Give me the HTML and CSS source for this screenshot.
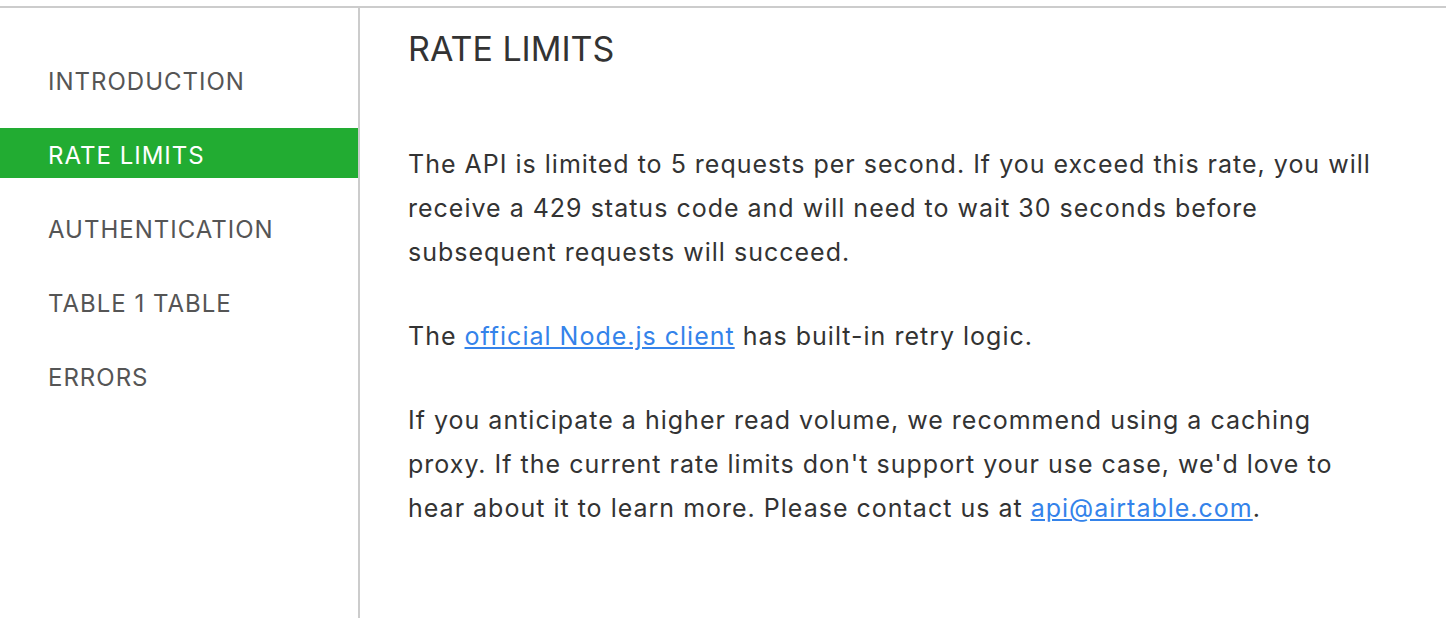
FILE: index.html
```html
<!DOCTYPE html>
<html lang="en">
<head>
    <meta charset="UTF-8">
    <meta name="viewport" content="width=device-width, initial-scale=1.0">
    <title>API Docs - Rate Limits</title>
    <link rel="stylesheet" href="styles.css">
</head>
<body>
    <div class="page">
        <nav class="sidebar">
            <a class="nav-item" href="#introduction">INTRODUCTION</a>
            <a class="nav-item active" href="#rate-limits">RATE LIMITS</a>
            <a class="nav-item" href="#authentication">AUTHENTICATION</a>
            <a class="nav-item" href="#table-1">TABLE 1 TABLE</a>
            <a class="nav-item" href="#errors">ERRORS</a>
        </nav>
        <main class="content">
            <h1>RATE LIMITS</h1>
            <p>The API is limited to 5 requests per second. If you exceed this rate, you will receive a 429 status code and will need to wait 30 seconds before subsequent requests will succeed.</p>
            <p>The <a href="#">official Node.js client</a> has built-in retry logic.</p>
            <p>If you anticipate a higher read volume, we recommend using a caching proxy. If the current rate limits don't support your use case, we'd love to hear about it to learn more. Please contact us at <a href="#">api@airtable.com</a>.</p>
        </main>
    </div>
</body>
</html>
```

FILE: styles.css
```css
/* Docs layout */
body {
    margin: 0;
    font-family: Inter, "Liberation Sans", sans-serif;
    background-color: white;
    color: #333;
}

.page {
    display: flex;
    margin-top: 6px;
    border-top: 2px solid #ccc;
    min-height: 610px;
}

.sidebar {
    width: 358px;
    flex-shrink: 0;
    border-right: 2px solid #ccc;
    padding-top: 46px;
    display: flex;
    flex-direction: column;
    gap: 24px;
}

.nav-item {
    display: flex;
    align-items: center;
    box-sizing: border-box;
    height: 50px;
    padding: 4px 0 0 48px;
    font-size: 24px;
    letter-spacing: 1px;
    color: #555;
    text-decoration: none;
}

.nav-item.active {
    background-color: #22ac32;
    color: white;
}

.content {
    flex: 1;
    padding: 0 40px 0 48px;
}

h1 {
    margin: 19px 0 71px;
    font-size: 34px;
    font-weight: 400;
    line-height: 44px;
    color: #333;
}

p {
    margin: 0 0 40px;
    font-size: 25px;
    letter-spacing: 1px;
    line-height: 44px;
    max-width: 985px;
}

a {
    color: #3483ea;
}
```
